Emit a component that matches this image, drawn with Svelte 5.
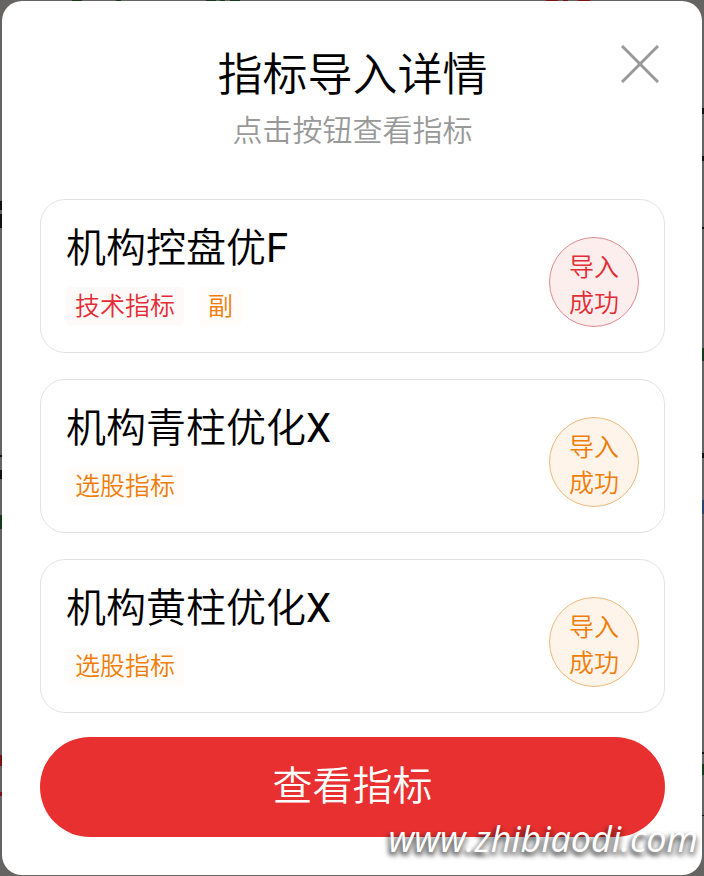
<script lang="ts">
  interface Tag {
    label: string;
    tone: 'red' | 'orange';
  }

  interface Indicator {
    name: string;
    tags: Tag[];
    tone: 'red' | 'orange';
  }

  const indicators: Indicator[] = [
    {
      name: '机构控盘优F',
      tone: 'red',
      tags: [
        { label: '技术指标', tone: 'red' },
        { label: '副', tone: 'orange' },
      ],
    },
    { name: '机构青柱优化X', tone: 'orange', tags: [{ label: '选股指标', tone: 'orange' }] },
    { name: '机构黄柱优化X', tone: 'orange', tags: [{ label: '选股指标', tone: 'orange' }] },
  ];

  let open = $state(true);
</script>

<div class="page">
  <!-- dimmed chart page, only its edges show around the dialog -->
  <svg class="backdrop" viewBox="0 0 704 876" preserveAspectRatio="none" aria-hidden="true">
    <path fill="#143c1b" d="M72 0h10v1h-10zM116 0h5v1h-5zM206 0h10v1h-10zM220 0h5v1h-5zM230 0h10v1h-10zM702 348h2v13h-2zM0 515h2v14h-2zM702 764h2v11h-2z" />
    <path fill="#7c1218" d="M546 0h12v1h-12zM563 0h5v1h-5zM578 0h12v1h-12zM0 755h2v11h-2zM0 792h2v4h-2z" />
    <path fill="#111" d="M0 201h2v9h-2zM0 214h2v14h-2zM0 455h2v2h-2zM0 470h2v9h-2zM702 108h2v6h-2zM702 156h2v5h-2zM702 227h2v2h-2zM702 453h2v5h-2zM702 752h2v2h-2zM702 815h2v1h-2z" />
    <path fill="#2c456f" d="M702 500h2v14h-2z" />
  </svg>

  {#if open}
    <div class="dialog" role="dialog" aria-labelledby="dialog-title">
      <button class="close" aria-label="关闭" onclick={() => (open = false)}>
        <svg viewBox="0 0 38 38" fill="none" stroke="#999" stroke-width="3">
          <path d="M1 1L37 37M37 1L1 37" />
        </svg>
      </button>

      <header>
        <h1 id="dialog-title">指标导入详情</h1>
        <p>点击按钮查看指标</p>
      </header>

      <ul class="list">
        {#each indicators as item}
          <li class="card">
            <div class="info">
              <h2>{item.name}</h2>
              <div class="tags">
                {#each item.tags as tag}
                  <span class="tag {tag.tone}">{tag.label}</span>
                {/each}
              </div>
            </div>
            <button class="status {item.tone}">导入<br />成功</button>
          </li>
        {/each}
      </ul>

      <button class="primary">查看指标</button>
    </div>
  {/if}

  <span class="watermark">www.zhibiaodi.com</span>
</div>

<style>
  :global(body) {
    margin: 0;
    background: #666463;
  }

  .page {
    position: relative;
    box-sizing: border-box;
    min-height: 100vh;
    padding: 1px 2px;
    overflow: hidden;
    font-family: Roboto, 'Noto Sans CJK SC DemiLight', 'Noto Sans CJK SC', sans-serif;
    font-weight: 400;
    color: #000;
  }

  .backdrop {
    position: absolute;
    inset: 0;
    width: 100%;
    height: 100%;
  }

  .dialog {
    position: relative;
    padding: 42px 37px 38px 38px;
    border-radius: 20px;
    background: #fff;
  }

  h1,
  h2,
  p,
  ul {
    margin: 0;
    padding: 0;
    font-weight: inherit;
  }

  button {
    margin: 0;
    padding: 0;
    font-family: inherit;
    font-weight: inherit;
    cursor: pointer;
  }

  header {
    text-align: center;
  }

  h1 {
    font-size: 45px;
    line-height: 66px;
  }

  header p {
    font-size: 30px;
    font-weight: 350;
    line-height: 44px;
    color: #999;
  }

  .close {
    position: absolute;
    top: 44px;
    right: 43px;
    width: 38px;
    height: 38px;
    border: none;
    background: none;
  }

  .close svg {
    display: block;
    width: 38px;
    height: 38px;
  }

  .list {
    display: flex;
    flex-direction: column;
    gap: 26px;
    margin-top: 46px;
    list-style: none;
  }

  .card {
    display: flex;
    align-items: flex-end;
    justify-content: space-between;
    padding: 20px 25px 25px;
    border: 1px solid #e2e2e2;
    border-radius: 25px;
  }

  .info {
    padding-bottom: 2px;
  }

  h2 {
    font-size: 40px;
    line-height: 58px;
  }

  .tags {
    display: flex;
    gap: 15px;
    margin-top: 9px;
  }

  .tag {
    padding: 2px 9px 0;
    border-radius: 4px;
    font-size: 25px;
    font-weight: 350;
    line-height: 36px;
  }

  .red {
    color: #e42c34;
    background: #fef9f9;
  }

  .orange {
    color: #f07d08;
    background: #fffcf9;
  }

  .status {
    width: 90px;
    height: 90px;
    padding-top: 8px;
    border: 1px solid;
    border-radius: 50%;
    font-size: 25px;
    font-weight: 350;
    line-height: 36px;
  }

  .status.red {
    border-color: #e08a90;
    background: #fdeeee;
  }

  .status.orange {
    border-color: #efb97c;
    background: #fef4ea;
  }

  .primary {
    display: block;
    width: 100%;
    height: 100px;
    margin-top: 24px;
    padding-bottom: 8px;
    border: none;
    border-radius: 50px;
    background: #e93030;
    color: #fff;
    font-size: 40px;
  }

  .watermark {
    position: absolute;
    right: 6px;
    bottom: 13px;
    font-family: 'Open Sans', 'Noto Sans', sans-serif;
    font-size: 36px;
    font-style: italic;
    font-weight: 500;
    line-height: 48px;
    color: #fff;
    text-shadow:
      -3px 3px 4px rgba(0, 0, 0, 0.5),
      1px 4px 5px rgba(0, 0, 0, 0.6);
    pointer-events: none;
  }
</style>
